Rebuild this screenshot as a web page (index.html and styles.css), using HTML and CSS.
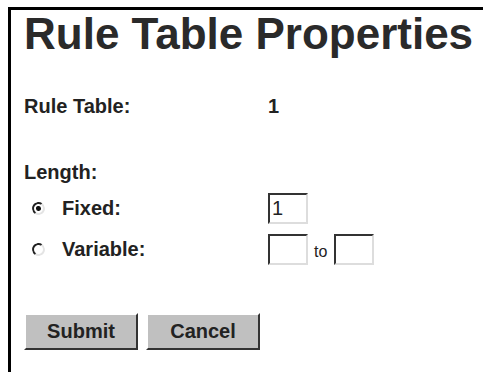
FILE: index.html
```html
<!DOCTYPE html>
<html>
	<head>
		<meta charset="utf-8">
		<title>Rule Table Properties</title>
		<link rel="stylesheet" href="styles.css">
	</head>
	<body>
		<div class="frame">
			<h1 class="title">Rule Table Properties</h1>
			<div class="info">
				<span class="label">Rule Table:</span>
				<span class="value">1</span>
			</div>
			<div class="section">Length:</div>
			<div class="opt">
				<span class="radio on"></span>
				<span class="opt-label">Fixed:</span>
				<input class="field" type="text" value="1">
			</div>
			<div class="opt">
				<span class="radio"></span>
				<span class="opt-label">Variable:</span>
				<input class="field" type="text">
				<span class="to">to</span>
				<input class="field" type="text">
			</div>
			<div class="buttons">
				<button class="btn">Submit</button>
				<button class="btn">Cancel</button>
			</div>
		</div>
	</body>
</html>
```

FILE: styles.css
```css
*{
	padding: 0;
	margin: 0;
	box-sizing: border-box;
}
html, body{
	height: 100%;
}
body{
	font-family: "Liberation Sans", Arial, sans-serif;
	color: #222;
	background: #fff;
	overflow: hidden;
}
.frame{
	margin: 7px 0 0 8px;
	border-top: 3px solid #000;
	border-left: 3px solid #000;
	height: calc(100% - 7px);
	padding-left: 13px;
}
.title{
	font-size: 44px;
	line-height: 44px;
	font-weight: bold;
	color: #2a2a2a;
	margin-top: 2px;
	white-space: nowrap;
}
.info{
	display: flex;
	margin-top: 38px;
	font-size: 20px;
	line-height: 24px;
	font-weight: bold;
}
.info .label{
	width: 244px;
}
.section{
	margin-top: 42px;
	font-size: 20px;
	line-height: 24px;
	font-weight: bold;
}
.opt{
	display: flex;
	align-items: center;
	height: 31px;
	margin-top: 9px;
	font-size: 20px;
	font-weight: bold;
}
.opt + .opt{
	margin-top: 10px;
}
.radio{
	width: 13px;
	height: 13px;
	margin-left: 8px;
	margin-right: 17px;
	border-radius: 50%;
	border: 2px solid;
	border-color: #222 #e4e4e4 #e4e4e4 #222;
	transform: rotate(-10deg);
	display: flex;
	align-items: center;
	justify-content: center;
}
.radio.on::after{
	content: "";
	width: 5px;
	height: 5px;
	border-radius: 50%;
	background: #111;
}
.opt-label{
	width: 206px;
}
.field{
	width: 40px;
	height: 31px;
	border: 2px solid;
	border-color: #333 #ddd #ddd #333;
	font-family: "Liberation Sans", Arial, sans-serif;
	font-size: 20px;
	color: #222;
	padding: 0 2px;
	outline: none;
	background: #fff;
}
.to{
	font-size: 16px;
	font-weight: normal;
	margin: 4px 7px 0 6px;
}
.buttons{
	display: flex;
	gap: 8px;
	margin-top: 48px;
}
.btn{
	width: 114px;
	height: 37px;
	background: #c0c0c0;
	border: 2px solid;
	border-color: #fff #333 #333 #fff;
	font-family: "Liberation Sans", Arial, sans-serif;
	font-size: 20px;
	font-weight: bold;
	color: #222;
}
```
